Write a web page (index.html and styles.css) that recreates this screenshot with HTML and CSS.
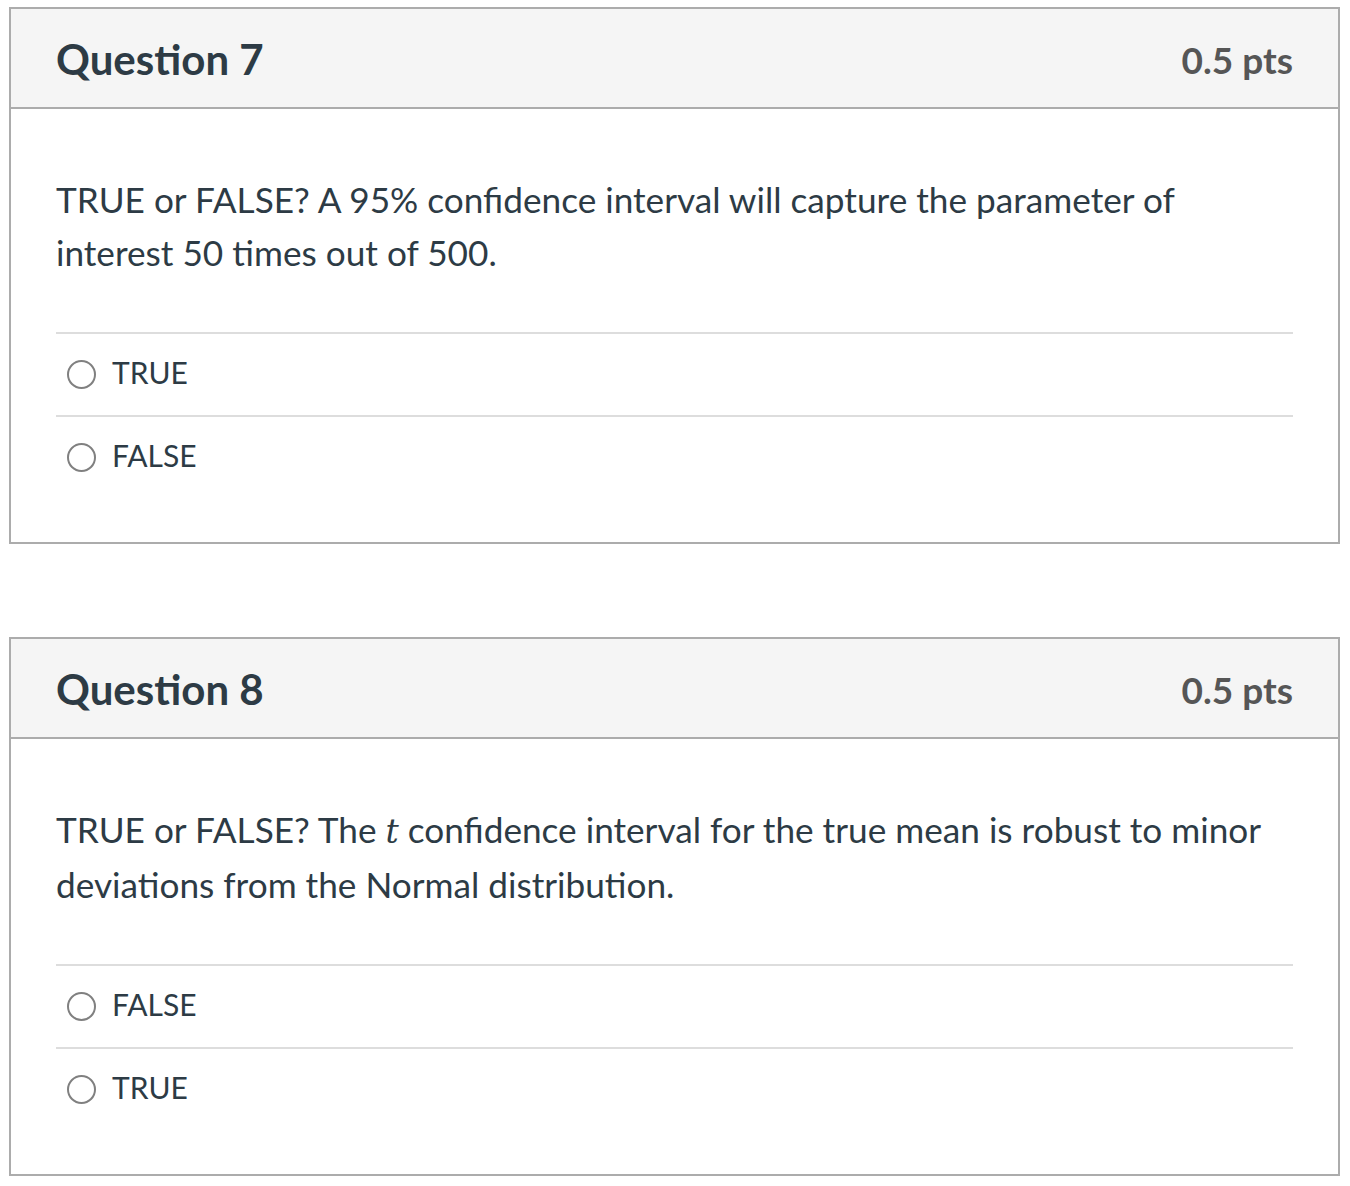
FILE: index.html
```html
<!DOCTYPE html>
<html lang="en">
<head>
<meta charset="utf-8">
<title>Quiz</title>
<link rel="stylesheet" href="styles.css">
</head>
<body>
<main class="quiz">
  <section class="question">
    <header class="q-header">
      <h2 class="q-title">Question 7</h2>
      <span class="q-points">0.5 pts</span>
    </header>
    <div class="q-body">
      <p class="q-text">TRUE or FALSE? A 95% confidence interval will capture the parameter of interest 50 times out of 500.</p>
      <ul class="answers">
        <li class="answer"><span class="radio"></span><span class="answer-label">TRUE</span></li>
        <li class="answer"><span class="radio"></span><span class="answer-label">FALSE</span></li>
      </ul>
    </div>
  </section>

  <section class="question">
    <header class="q-header">
      <h2 class="q-title">Question 8</h2>
      <span class="q-points">0.5 pts</span>
    </header>
    <div class="q-body">
      <p class="q-text">TRUE or FALSE? The <span class="math">t</span> confidence interval for the true mean is robust to minor deviations from the Normal distribution.</p>
      <ul class="answers">
        <li class="answer"><span class="radio"></span><span class="answer-label">FALSE</span></li>
        <li class="answer"><span class="radio"></span><span class="answer-label">TRUE</span></li>
      </ul>
    </div>
  </section>
</main>
</body>
</html>
```

FILE: styles.css
```css
html, body {
  margin: 0;
  padding: 0;
  background: #ffffff;
}

body {
  font-family: Lato, "Open Sans", "Liberation Sans", sans-serif;
  color: #2d3b45;
}

.quiz {
  display: flex;
  flex-direction: column;
  gap: 93px;
  padding: 7px 10px 0 9px;
}

.question {
  border: 2px solid #acacac;
  background: #ffffff;
}

.q-header {
  display: flex;
  align-items: center;
  justify-content: space-between;
  box-sizing: border-box;
  height: 100px;
  padding: 2px 45px 0 45px;
  background: #f5f5f5;
  border-bottom: 2px solid #acacac;
}

.q-title {
  margin: 0;
  font-size: 42px;
  font-weight: 700;
  color: #2d3b45;
}

.q-points {
  font-size: 37px;
  font-weight: 700;
  color: #565656;
}

.q-body {
  padding: 64px 45px 44px 45px;
}

.q-text {
  margin: 0 0 53px 0;
  font-size: 35.2px;
  line-height: 53px;
  color: #2d3b45;
}

.math {
  font-family: "DejaVu Serif", "Liberation Serif", serif;
  font-style: italic;
  font-size: 33px;
}

.answers {
  list-style: none;
  margin: 0;
  padding: 0;
}

.answer {
  display: flex;
  align-items: center;
  gap: 16px;
  height: 81px;
  padding-left: 11px;
  border-top: 2px solid #dddddd;
}

.radio {
  box-sizing: border-box;
  width: 29px;
  height: 29px;
  border: 2px solid #808080;
  border-radius: 50%;
  flex: none;
}

.answer-label {
  font-size: 30px;
  margin-bottom: 5px;
  color: #2d3b45;
}
```
